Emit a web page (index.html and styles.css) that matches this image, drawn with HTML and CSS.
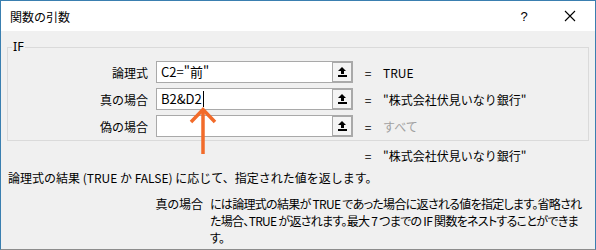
FILE: index.html
```html
<!DOCTYPE html>
<html lang="ja">
<head>
    <meta charset="utf-8"/>
    <title>関数の引数</title>
    <link rel="stylesheet" href="styles.css">
</head>
<body>
<div class="dialog">
    <div class="titleBar">
        <span class="title">関数の引数</span>
        <span class="help">?</span>
        <span class="close">
            <svg width="12" height="12" viewBox="0 0 12 12"><path d="M1 1 L11 11 M11 1 L1 11" stroke="#000" stroke-width="1.1" fill="none"/></svg>
        </span>
    </div>
    <div class="dialogBody">
        <fieldset class="argGroup">
            <legend>IF</legend>
            <div class="argRow">
                <span class="argLabel">論理式</span>
                <span class="argInput">C2="前"</span>
                <span class="refButton"><span class="refIcon"></span></span>
                <span class="equals">=</span>
                <span class="argValue">TRUE</span>
            </div>
            <div class="argRow">
                <span class="argLabel">真の場合</span>
                <span class="argInput">B2&amp;D2<span class="caret"></span></span>
                <span class="refButton"><span class="refIcon"></span></span>
                <span class="equals">=</span>
                <span class="argValue">"株式会社伏見いなり銀行"</span>
            </div>
            <div class="argRow">
                <span class="argLabel">偽の場合</span>
                <span class="argInput"></span>
                <span class="refButton"><span class="refIcon"></span></span>
                <span class="equals">=</span>
                <span class="argValue muted">すべて</span>
            </div>
        </fieldset>
        <div class="resultRow">
            <span class="equals">=</span>
            <span class="argValue">"株式会社伏見いなり銀行"</span>
        </div>
        <p class="funcDesc">論理式の結果 (TRUE か FALSE) に応じて、指定された値を返します。</p>
        <div class="argHelp">
            <span class="helpName">真の場合</span>
            <span class="helpText">には論理式の結果が TRUE であった場合に返される値を指定します。省略され<br>た場合、TRUE が返されます。最大 7 つまでの IF 関数をネストすることができま<br>す。</span>
        </div>
        <div class="pointer">
            <svg width="28" height="48" viewBox="0 0 28 48">
                <path d="M14 3 V48" stroke="#f26b2a" stroke-width="3.5" fill="none"/>
                <path d="M2 16 L14 3.5 L26 16" stroke="#f26b2a" stroke-width="3.5" fill="none"/>
            </svg>
        </div>
    </div>
</div>
</body>
</html>
```

FILE: styles.css
```css
html, body{
    margin: 0;
    padding: 0;
}
body{
    font-family: "Noto Sans CJK JP", "Noto Sans", sans-serif;
    font-size: 12px;
    color: #000;
}
.dialog{
    width: 594px;
    height: 248px;
    border: 1px solid #3a7fb0;
    border-bottom-color: #8c8c8c;
    background: #f0f0f0;
    overflow: hidden;
}
.titleBar{
    height: 30px;
    background: #fff;
    display: flex;
    align-items: center;
    padding-left: 9px;
    font-size: 12px;
}
.title{
    flex: 1;
}
.help{
    width: 46px;
    text-align: center;
    font-family: "Liberation Sans", sans-serif;
    font-size: 13px;
}
.close{
    width: 46px;
    display: flex;
    justify-content: center;
    margin-right: 2px;
}
.dialogBody{
    position: relative;
    padding: 9px 6px 0 6px;
}
.argGroup{
    margin: 0;
    padding: 7px 0 5px 0;
    border: 1px solid #dadada;
    height: 87px;
}
.argGroup legend{
    padding: 0 1px;
    margin-left: 4px;
    font-family: "Noto Sans", sans-serif;
    font-size: 12.5px;
    line-height: 14px;
}
.argRow{
    display: flex;
    align-items: center;
    height: 22px;
    margin-bottom: 5px;
}
.argLabel{
    width: 140px;
    text-align: right;
    padding-right: 8px;
}
.argInput{
    box-sizing: border-box;
    width: 176px;
    height: 22px;
    border: 1px solid #a9a9a9;
    border-right: none;
    background: #fff;
    padding: 0 4px;
    line-height: 20px;
    font-size: 13px;
    display: flex;
    align-items: center;
}
.caret{
    display: inline-block;
    width: 1px;
    height: 16px;
    background: #000;
    margin-left: 1px;
}
.refButton{
    box-sizing: border-box;
    width: 21px;
    height: 22px;
    border: 2px solid #a9a9a9;
    border-left-width: 1px;
    background: #f4f4f4;
    display: flex;
    align-items: center;
    justify-content: center;
}
.refIcon{
    position: relative;
    width: 9px;
    height: 10px;
    border-bottom: 2px solid #000;
    box-sizing: border-box;
}
.refIcon::before{
    content: "";
    position: absolute;
    left: 0;
    top: 0;
    border-left: 4.5px solid transparent;
    border-right: 4.5px solid transparent;
    border-bottom: 4px solid #000;
}
.refIcon::after{
    content: "";
    position: absolute;
    left: 3px;
    top: 4px;
    width: 3px;
    height: 3px;
    background: #000;
}
.equals{
    width: 30px;
    text-align: center;
}
.argValue{
    padding-left: 0;
}
.muted{
    color: #a0a0a0;
}
.resultRow{
    display: flex;
    padding-left: 346px;
    margin-top: 5px;
    height: 18px;
    align-items: center;
}
.funcDesc{
    margin: 6px 0 0 1px;
    line-height: 16px;
}
.argHelp{
    display: flex;
    margin-top: 9px;
}
.helpName{
    width: 196px;
    text-align: right;
    padding-right: 7px;
    flex-shrink: 0;
    font-feature-settings: "palt";
}
.helpText{
    white-space: nowrap;
    line-height: 17px;
    letter-spacing: -0.7px;
    font-feature-settings: "palt";
}
.pointer{
    position: absolute;
    left: 188px;
    top: 75px;
    line-height: 0;
}
```
